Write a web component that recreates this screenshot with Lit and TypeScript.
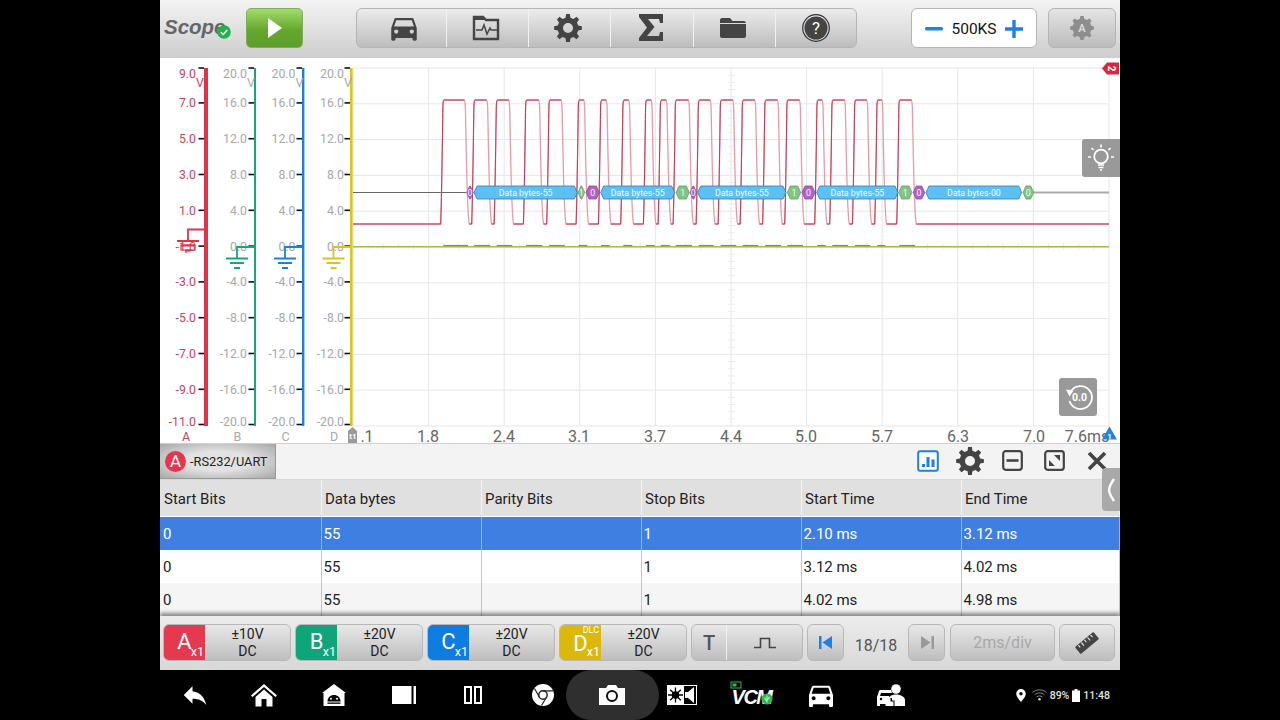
import { LitElement, html, css, svg } from "lit";
import { customElement } from "lit/decorators.js";

const CAR = "M18.92 6.01C18.72 5.42 18.16 5 17.5 5h-11c-.66 0-1.21.42-1.42 1.01L3 12v8c0 .55.45 1 1 1h1c.55 0 1-.45 1-1v-1h12v1c0 .55.45 1 1 1h1c.55 0 1-.45 1-1v-8l-2.08-5.99zM6.5 16c-.83 0-1.5-.67-1.5-1.5S5.67 13 6.5 13s1.5.67 1.5 1.5S7.33 16 6.5 16zm11 0c-.83 0-1.5-.67-1.5-1.5s.67-1.5 1.5-1.5 1.5.67 1.5 1.5-.67 1.5-1.5 1.5zM5 11l1.5-4.5h11L19 11H5z";

function gearPath(c: number, R: number, r: number, hole: number, n = 8) {
  const step = (Math.PI * 2) / n;
  let d = "";
  const p = (rad: number, a: number) => `${(c + rad * Math.sin(a)).toFixed(2)} ${(c - rad * Math.cos(a)).toFixed(2)}`;
  for (let i = 0; i < n; i++) {
    const a = i * step;
    d += `${i ? "L" : "M"}${p(r, a - 0.3 * step)}L${p(R, a - 0.17 * step)}L${p(R, a + 0.17 * step)}L${p(r, a + 0.3 * step)}`;
  }
  d += `Z M${c - hole} ${c}a${hole} ${hole} 0 1 0 ${hole * 2} 0a${hole} ${hole} 0 1 0 ${-hole * 2} 0Z`;
  return d;
}

const HIGHS: [number, number][] = [
  [443.3, 465], [474.3, 487.3], [496.7, 509.3], [526, 539.3], [549.3, 561.7], [578.7, 584.3],
  [601, 606.7], [623.3, 629.3], [646, 651.7], [660.7, 666.7], [675.7, 689], [698.7, 710.7],
  [720.7, 733.3], [742.7, 755.3], [765.2, 778], [787.3, 800], [817.3, 822.7], [832.3, 845],
  [855, 867.3], [877.3, 882.3], [899.3, 912],
];
const HI = 100, LO = 224;

function wave() {
  let all = `M353 ${LO}`;
  let dark = `M353 ${LO}`;
  for (const [a, b] of HIGHS) {
    const rise = `L${a - 2.6} ${LO}C${a - 1.6} ${LO - 30} ${a - 0.9} ${HI + 40} ${a - 0.4} ${HI + 6}Q${a - 0.2} ${HI} ${a + 0.8} ${HI}L${b - 0.6} ${HI}`;
    const fall = `Q${b} ${HI} ${b + 0.4} ${HI + 8}C${b + 1.6} ${HI + 70} ${b + 2.2} ${LO - 4} ${b + 4.4} ${LO}`;
    all += rise + fall;
    dark += rise + `M${b + 4.4} ${LO}`;
  }
  all += `L1109 ${LO}`;
  dark += `L1109 ${LO}`;
  return { all, dark };
}

const XS = Array.from({ length: 11 }, (_, i) => 353 + i * 75.6);
const GY = Array.from({ length: 11 }, (_, i) => 68 + i * 35.8);
const TY = GY.map((y, i) => (i === 0 ? y : y - 0.9 - (i === 10 ? 0.6 : 0)));

type Seg = { k: "p" | "b" | "g"; a: number; b: number; t: string };
const SEGS: Seg[] = [
  { k: "p", a: 466.7, b: 473.3, t: "0" },
  { k: "b", a: 474, b: 577.3, t: "Data bytes-55" },
  { k: "g", a: 578, b: 584.7, t: "1" },
  { k: "p", a: 586, b: 599.3, t: "0" },
  { k: "b", a: 600.7, b: 674.7, t: "Data bytes-55" },
  { k: "g", a: 676, b: 689.3, t: "1" },
  { k: "p", a: 690, b: 696.7, t: "0" },
  { k: "b", a: 697.7, b: 786, t: "Data bytes-55" },
  { k: "g", a: 787.3, b: 800.7, t: "1" },
  { k: "p", a: 802, b: 815, t: "0" },
  { k: "b", a: 816.7, b: 898, t: "Data bytes-55" },
  { k: "g", a: 898.7, b: 912, t: "1" },
  { k: "p", a: 913.3, b: 924.7, t: "0" },
  { k: "b", a: 926, b: 1021.7, t: "Data bytes-00" },
  { k: "g", a: 1023, b: 1033.7, t: "0" },
];
const SEG_COL = { p: ["#b262c4", "#8c4aa0"], b: ["#5cc0f2", "#2f7ea8"], g: ["#84c484", "#5f9f66"] };

const AXES = [
  { lab: ["9.0", "7.0", "5.0", "3.0", "1.0", "-1.0", "-3.0", "-5.0", "-7.0", "-9.0", "-11.0"], x: 204, w: 4, lx: 196, col: "#e0334a", tc: "#c9455a", name: "A", nx: 186 },
  { lab: ["20.0", "16.0", "12.0", "8.0", "4.0", "0.0", "-4.0", "-8.0", "-12.0", "-16.0", "-20.0"], x: 254, w: 2, lx: 247, col: "#12a87c", tc: "#a8a8a8", name: "B", nx: 237.5 },
  { lab: ["20.0", "16.0", "12.0", "8.0", "4.0", "0.0", "-4.0", "-8.0", "-12.0", "-16.0", "-20.0"], x: 302, w: 2.4, lx: 295.5, col: "#1b82dc", tc: "#a8a8a8", name: "C", nx: 285.5 },
  { lab: ["20.0", "16.0", "12.0", "8.0", "4.0", "0.0", "-4.0", "-8.0", "-12.0", "-16.0", "-20.0"], x: 350, w: 2.6, lx: 344, col: "#dcc320", tc: "#a8a8a8", name: "D", nx: 334 },
];

function ground(x: number, y: number, col: string, barX: number, top: number) {
  return svg`<path d="M${barX} ${top}H${x}V${y}" fill="none" stroke=${col} stroke-width="1.8"/>
    <path d="M${x - 11} ${y + 0.5}h22M${x - 7} ${y + 5}h14M${x - 3} ${y + 10}h6" fill="none" stroke=${col} stroke-width="2"/>`;
}

function scope() {
  const w = wave();
  const xl = [".1", "1.8", "2.4", "3.1", "3.7", "4.4", "5.0", "5.7", "6.3", "7.0"];
  const xlx = [367, 428, 504, 579, 655, 731, 806, 882, 958, 1034];
  return html`<svg class="plot" viewBox="160 58 960 386" width="960" height="386">
    ${XS.map((x) => svg`<line x1=${x} x2=${x} y1="68" y2="426" stroke="#e6e6e6"/>`)}
    ${GY.map((y) => svg`<line x1="353" x2="1109" y1=${y} y2=${y} stroke="#e6e6e6"/>`)}
    ${Array.from({ length: 51 }, (_, i) => svg`<line x1="728" x2="735" y1=${68 + i * 7.16} y2=${68 + i * 7.16} stroke="#ececec"/>`)}
    ${Array.from({ length: 51 }, (_, i) => svg`<line x1=${353 + i * 15.12} x2=${353 + i * 15.12} y1="243.500" y2="249.500" stroke="#e8e8e8"/>`)}

    <line x1="353" x2="466" y1="192.5" y2="192.5" stroke="#666" stroke-width="1"/>
    <line x1="1033" x2="1109" y1="192.5" y2="192.5" stroke="#aaa" stroke-width="2"/>

    <path d=${w.all} fill="none" stroke="#e79aa8" stroke-width="1.300"/>
    <path d=${w.dark} fill="none" stroke="#c83850" stroke-width="1"/>

    ${SEGS.map((s) => {
      const c = SEG_COL[s.k];
      const n = Math.min(3, (s.b - s.a) / 2.2);
      return svg`<path d="M${s.a + n} 186H${s.b - n}L${s.b} 192.5L${s.b - n} 199H${s.a + n}L${s.a} 192.5Z" fill=${c[0]} stroke=${c[1]} stroke-width="0.8"/>
      <text x=${(s.a + s.b) / 2} y="195.700" text-anchor="middle" class="seg">${s.t}</text>`;
    })}

    ${HIGHS.map(([a, b]) => svg`<line x1=${a} x2=${b + 3} y1="245.700" y2="245.700" stroke="#2fa98f" stroke-width="1.500"/>`)}
    <line x1="353" x2="1109" y1="246.8" y2="246.8" stroke="#a9bd3e" stroke-width="1.5"/>

    ${AXES.map((a) => svg`
      <rect x=${a.x} y="68" width=${a.w} height="358" fill=${a.col}/>
      ${TY.map((y, i) => svg`
        <rect x=${a.x - 5.5} y=${y - 0.8} width="5.5" height="1.6" fill="#111"/>
        <text x=${a.lx} y=${i === 0 ? y + 9.500 : i === 10 ? y + 1.500 : y + 4.500} text-anchor="end" class="yl" fill=${a.tc}>${a.lab[i]}</text>`)}
      <text x=${a.lx + 4} y="87" text-anchor="middle" class="yl" fill=${a.tc}>V</text>
      <text x=${a.nx} y="441" text-anchor="middle" class="nm" fill=${a.tc}>${a.name}</text>`)}

    ${ground(188, 240.5, "#e0334a", 204, 229.5)}
    <path d="M181 245h14v5h-14zM186 250v3" fill="none" stroke="#e0334a" stroke-width="1.2"/>
    ${ground(237, 258, "#12a87c", 254, 247)}
    ${ground(285, 258, "#1b82dc", 302, 247)}
    ${ground(333.5, 258, "#dcc320", 350, 247)}

    ${xl.map((t, i) => svg`<text x=${xlx[i]} y="441.5" text-anchor="middle" class="xl">${t}</text>`)}
    <text x="1087" y="441.5" text-anchor="middle" class="xl">7.6ms</text>

    <path d="M348 431l4.5-4 4.5 4v12h-9z" fill="#9a9a9a"/>
    <text x="353" y="439" text-anchor="middle" class="t1">t1</text>
    <path d="M1109.500 426.500l7.500 13h-15z" fill="#1f86e0"/>
    <text x="1109.500" y="438.500" text-anchor="middle" class="t1">1</text>

    <path d="M1107 62.500h12v12h-12l-5-6z" fill="#d9263f"/>
    <text transform="translate(1111.500 68.500) rotate(90)" y="3.500" text-anchor="middle" class="t2">2</text>
  </svg>`;
}

const ROWS = [
  ["0", "55", "", "1", "2.10 ms", "3.12 ms"],
  ["0", "55", "", "1", "3.12 ms", "4.02 ms"],
  ["0", "55", "", "1", "4.02 ms", "4.98 ms"],
];
const HEAD = ["Start Bits", "Data bytes", "Parity Bits", "Stop Bits", "Start Time", "End Time"];

const CH = [
  { n: "A", cls: "a", r: "±10V" },
  { n: "B", cls: "b", r: "±20V" },
  { n: "C", cls: "c", r: "±20V" },
  { n: "D", cls: "d", r: "±20V" },
];

@customElement("app-root")
export class AppRoot extends LitElement {
  static styles = css`
    :host { display: block; width: 1280px; height: 720px; background: #000; font-family: Roboto, "Liberation Sans", sans-serif; overflow: hidden; }
    .screen { width: 960px; height: 720px; margin: 0 auto; display: flex; flex-direction: column; background: #fff; }

    .toolbar { height: 58px; box-sizing: border-box; padding: 8px 0 0 4px; display: flex; align-items: flex-start; background: linear-gradient(#f4f4f4, #cdcdcd); flex: none; }
    .logo { width: 82px; height: 40px; display: flex; align-items: center; position: relative; font: italic bold 20.500px "Liberation Sans", sans-serif; color: #666; }
    .logo span { margin-top: -3px; }
    .logo svg { position: absolute; left: 53px; top: 17px; }
    .play { width: 57px; height: 40px; box-sizing: border-box; border-radius: 5px; border: 1px solid #7fae5c; background: linear-gradient(#a0dc6a, #66a82e 55%, #5c9e2a); display: flex; align-items: center; justify-content: center; }
    .group { margin-left: 53px; width: 501px; height: 40px; box-sizing: border-box; border: 1px solid #b5b5b5; border-radius: 6px; background: linear-gradient(#ececec, #bdbdbd); display: flex; }
    .group > div { width: 82.2px; flex: none; display: flex; align-items: center; justify-content: center; border-left: 1px solid #f2f2f2; box-sizing: border-box; padding-bottom: 1px; }
    .group > div:first-child { width: 89px; border-left: none; padding-left: 4px; }
    .group > .w4 { padding-right: 4px; }
    .group > .w1 { padding-right: 2px; }
    .group > .w3 { padding-right: 3px; }
    .zoombox { margin-left: 54px; width: 126px; height: 40px; box-sizing: border-box; border: 1px solid #b5b5b5; border-radius: 6px; background: #fff; display: flex; align-items: center; justify-content: space-between; padding: 2px 13px 0; font-size: 15.500px; color: #111; }
    .auto { margin-left: 11px; width: 68px; height: 40px; box-sizing: border-box; border: 1px solid #b5b5b5; border-radius: 6px; background: linear-gradient(#e4e4e4, #bcbcbc); display: flex; align-items: center; justify-content: center; }

    .scope { position: relative; height: 386px; flex: none; border-bottom: 1px solid #d0d0d0; box-sizing: border-box; background: #fff; }
    .plot { display: block; }
    .seg { font: 8.800px Roboto, sans-serif; fill: #eef8ff; }
    .yl { font: 12.300px Roboto, sans-serif; }
    .nm { font: 12.500px Roboto, sans-serif; }
    .xl { font: 16px Roboto, sans-serif; fill: #666; }
    .t1 { font: bold 8px Roboto, sans-serif; fill: #fff; }
    .t2 { font: bold 10px Roboto, sans-serif; fill: #fff; }
    .bulb { position: absolute; left: 921.500px; top: 81px; width: 38.500px; height: 38px; background: #999; border-radius: 3px 0 0 3px; display: flex; align-items: center; justify-content: center; }
    .reset { position: absolute; left: 899px; top: 320px; width: 38px; height: 38px; background: #999; border-radius: 3px; display: flex; align-items: center; justify-content: center; }

    .decoder { position: relative; flex: none; }
    .tabbar { height: 36px; box-sizing: border-box; background: #f3f3f3; border-bottom: 1px solid #d8d8d8; display: flex; align-items: stretch; }
    .tab { width: 116px; box-sizing: border-box; display: flex; align-items: center; gap: 4px; padding-left: 5px; font-size: 12.800px; color: #222; background: radial-gradient(ellipse at center, #e2e2e2 40%, #a8a8a8 100%); border-right: 1px solid #999; border-bottom: 1px solid #999; white-space: nowrap; }
    .dot { width: 21px; height: 21px; border-radius: 50%; background: #e5364c; color: #fff; font-size: 17px; display: flex; align-items: center; justify-content: center; flex: none; }
    .tools { margin-left: auto; display: flex; align-items: center; padding: 0 13px 2px 0; }
    .tools svg { display: block; flex: none; }
    .tools .t-a { margin-right: 17px; }
    .tools .t-b { margin-right: 18px; }
    .tools .t-c { margin-right: 21px; }
    .tools .t-d { margin-right: 22px; }
    .side { position: absolute; right: 0; top: 24px; width: 18px; height: 43px; background: #a9a9a9; border-radius: 4px 0 0 4px; z-index: 2; display: flex; align-items: center; justify-content: center; }

    .table { height: 136px; overflow: hidden; flex: none; font-size: 15px; color: #222; }
    .tr { display: grid; grid-template-columns: 162px 160px 160px 160px 160px 158px; height: 33px; }
    .tr > div { display: flex; align-items: center; padding-left: 1.500px; border-right: 1px solid #c4c4c4; box-sizing: border-box; }
    .tr > div:first-child { padding-left: 3px; }
    .tr.h { height: 37px; background: #e0e0e0; border-bottom: 1px solid #fff; box-sizing: border-box; }
    .tr.h > div { padding: 2px 0 0 3px; border-right-color: #f4f4f4; }
    .tr.h > div:first-child { padding-left: 4px; }
    .tr.sel { background: #3f7fe2; color: #fff; }
    .tr.sel > div { border-right-color: #8fb4ec; }
    .tr.alt { background: #f5f5f5; }

    .footer { position: relative; height: 54px; flex: none; box-sizing: border-box; padding: 8px 0 0 3px; display: flex; gap: 4px; background: linear-gradient(#ececec, #d8d8d8); box-shadow: 0 -3px 4px rgba(0,0,0,.45); font-size: 14px; color: #222; }
    .btn { height: 37px; box-sizing: border-box; border: 1px solid #b8b8b8; border-radius: 6px; background: linear-gradient(#e8e8e8, #bebebe); display: flex; align-items: center; justify-content: center; flex: none; overflow: hidden; }
    .ch { width: 128px; justify-content: flex-start; }
    .swatch { width: 41px; height: 100%; color: #fff; font-size: 22px; line-height: 18px; display: flex; align-items: center; justify-content: center; position: relative; box-sizing: border-box; padding: 0 0 1px 0; flex: none; }
    .swatch small { position: absolute; right: 1px; bottom: 2px; font-size: 12.500px; line-height: 12px; }
    .swatch i { position: absolute; right: 2px; top: 1px; font: 9px/9px Roboto, sans-serif; }
    .swatch.a { background: #e4394f; } .swatch.b { background: #0ea57b; } .swatch.c { background: #0f7ce0; } .swatch.d { background: #dcb80a; padding-top: 3px; }
    .range { flex: 1; text-align: center; line-height: 16.500px; }
    .trig { width: 112px; padding: 0; justify-content: flex-start; }
    .trig > div { height: 100%; display: flex; align-items: center; justify-content: center; }
    .trig .t { width: 35px; border-right: 1px solid #f0f0f0; font-size: 20px; font-weight: 500; color: #555; box-sizing: border-box; }
    .trig .e { flex: 1; }
    .sq { width: 37px; }
    .count { width: 56px; flex: none; text-align: center; align-self: center; font-size: 16px; color: #555; margin-top: -3px; white-space: nowrap; }
    .time { width: 105px; margin-left: 1px; font-size: 16px; color: #a8a8a8; }
    .rule { width: 56px; }

    .nav { position: relative; height: 50px; flex: none; background: #000; display: flex; align-items: center; color: #e4e4e4; }
    .slot { width: 69.600px; flex: none; height: 100%; display: flex; align-items: center; justify-content: center; position: relative; }
    .slot svg { position: relative; }
    .pill::before { content: ""; position: absolute; left: -11.500px; right: -11.500px; top: 0; bottom: 0; background: #2f2f2f; border-radius: 25px; }
    .vcm { font: italic bold 20px "Liberation Sans", sans-serif; color: #fff; letter-spacing: -1.5px; position: relative; top: 2px; }
    .slot svg.usb { position: absolute; left: 11px; top: 8px; }
    .status { margin-left: auto; padding-right: 10px; display: flex; align-items: center; gap: 3px; font-size: 10.500px; font-weight: 500; white-space: nowrap; }
    .status .pin { margin-right: 3px; }
    .status .clock { font-size: 10.500px; }
  `;

  render() {
    const dark = "#444";
    return html`<div class="screen">
      <div class="toolbar">
        <div class="logo"><span>Scope</span>
          <svg width="14" height="14" viewBox="0 0 14 14"><circle cx="7" cy="7" r="6.800" fill="#22b24c"/><path d="M3.800 7.200l2.300 2.300 4.200-4.500" fill="none" stroke="#fff" stroke-width="1.500"/></svg>
        </div>
        <div class="play"><svg width="16" height="22" viewBox="0 0 16 22"><path d="M1 1l14 10L1 21z" fill="#fff"/></svg></div>
        <div class="group">
          <div><svg width="34" height="34" viewBox="0 0 24 24"><path d=${CAR} fill=${dark}/></svg></div>
          <div class="w4"><svg width="28" height="26" viewBox="0 0 28 26"><path d="M2 2h9l3 3h12v19H2z" fill="none" stroke=${dark} stroke-width="2.400"/><path d="M1 2h10l3 3H1z" fill=${dark}/><path d="M4 15h6l2-5 3 9 3-6 1 2h6" fill="none" stroke=${dark} stroke-width="1.500"/></svg></div>
          <div class="w4"><svg width="28" height="28" viewBox="0 0 28 28"><path d=${gearPath(14, 14, 10.500, 5)} fill=${dark} fill-rule="evenodd"/></svg></div>
          <div class="w1"><svg width="24" height="27" viewBox="0 0 24 27"><path d="M0 0h24v9h-3l-1-4H9l6.500 8L8 22h12l1-4h3v9H0v-3l8-10.500L0 3z" fill=${dark}/></svg></div>
          <div class="w3"><svg width="26" height="20" viewBox="0 0 26 20"><path d="M0 2c0-1 1-2 2-2h8l2.500 3H24c1 0 2 1 2 2H0z" fill=${dark}/><path d="M0 6h26v12c0 1-1 2-2 2H2c-1 0-2-1-2-2z" fill=${dark}/></svg></div>
          <div><svg width="28" height="28" viewBox="0 0 28 28"><circle cx="14" cy="14" r="13.300" fill="none" stroke="#333" stroke-width="1.200"/><circle cx="14" cy="14" r="11.500" fill=${dark}/><text x="14" y="20" text-anchor="middle" font-family="Roboto, sans-serif" font-size="17" fill="#fff">?</text></svg></div>
        </div>
        <div class="zoombox">
          <svg width="18" height="4" viewBox="0 0 18 4"><rect width="18" height="3.400" rx="1.500" fill="#1f86e0"/></svg>
          <span>500KS</span>
          <svg width="18" height="18" viewBox="0 0 18 18"><path d="M7.300 0h3.400v7.300H18v3.400h-7.300V18H7.300v-7.300H0V7.300h7.300z" fill="#1f7fe6"/></svg>
        </div>
        <div class="auto"><svg width="24" height="24" viewBox="0 0 24 24"><path d=${gearPath(12, 12, 9.500, 0.01)} fill="#8e8e8e"/><text x="12" y="16" text-anchor="middle" font-family="Roboto, sans-serif" font-weight="700" font-size="11" fill="#d6d6d6">A</text></svg></div>
      </div>

      <div class="scope">
        ${scope()}
        <div class="bulb"><svg width="30" height="30" viewBox="0 0 30 30" fill="none" stroke="#fff"><circle cx="15" cy="13.500" r="6.800" stroke-width="1.800"/><path d="M12 22h6M12.500 24.500h5M14 27h2" stroke-width="1.500"/><path d="M15 1.500v3M5.500 5l2 2M24.500 5l-2 2M2 14h3M25 14h3" stroke-width="1.600"/></svg></div>
        <div class="reset"><svg width="30" height="30" viewBox="0 0 30 30"><path d="M7 9a11.500 11.500 0 1 1-1.500 10" fill="none" stroke="#fff" stroke-width="1.800" transform="translate(1 0)"/><path d="M3 7.500l7.500 1-4 6z" fill="#fff"/><text x="16.500" y="19" text-anchor="middle" font-family="Roboto, sans-serif" font-weight="700" font-size="10.500" fill="#fff">0.0</text></svg></div>
      </div>

      <div class="decoder">
        <div class="tabbar">
          <div class="tab"><span class="dot">A</span><span>-RS232/UART</span></div>
          <div class="tools">
            <svg class="t-a" width="22" height="22" viewBox="0 0 22 22"><rect x="1.200" y="1.200" width="19.600" height="19.600" rx="2" fill="#fff" stroke="#1f7fe6" stroke-width="2"/><path d="M5 14h3v3H5zM9.500 7h3v10h-3zM14.500 9.500h3V17h-3z" fill="#1f7fe6"/></svg>
            <svg class="t-b" width="28" height="28" viewBox="0 0 28 28"><path d=${gearPath(14, 14, 10.500, 5)} fill=${dark} fill-rule="evenodd"/></svg>
            <svg class="t-c" width="21" height="21" viewBox="0 0 21 21"><rect x="1.200" y="1.200" width="18.600" height="18.600" rx="2.500" fill="none" stroke=${dark} stroke-width="2.200"/><rect x="4.500" y="9.200" width="12" height="2.600" fill=${dark}/></svg>
            <svg class="t-d" width="21" height="21" viewBox="0 0 21 21"><rect x="1.200" y="1.200" width="18.600" height="18.600" rx="2.500" fill="none" stroke=${dark} stroke-width="2.200"/><path d="M16 5v6l-6-6zM5 16v-6l6 6z" fill=${dark}/></svg>
            <svg width="20" height="20" viewBox="0 0 20 20"><path d="M2 2l16 16M18 2L2 18" stroke=${dark} stroke-width="3.600" fill="none"/></svg>
          </div>
        </div>
        <div class="side"><svg width="8" height="24" viewBox="0 0 8 24"><path d="M7 1C3 7 2 9 2 12s1 5 5 11" fill="none" stroke="#fff" stroke-width="2.400"/></svg></div>
        <div class="table">
          <div class="tr h">${HEAD.map((h) => html`<div>${h}</div>`)}</div>
          ${ROWS.map((r, i) => html`<div class="tr ${i === 0 ? "sel" : i === 2 ? "alt" : ""}">${r.map((c) => html`<div>${c}</div>`)}</div>`)}
        </div>
      </div>

      <div class="footer">
        ${CH.map((c) => html`<div class="btn ch">
          <div class="swatch ${c.cls}">${c.n}<small>x1</small>${c.n === "D" ? html`<i>DLC</i>` : ""}</div>
          <div class="range">${c.r}<br />DC</div>
        </div>`)}
        <div class="btn trig">
          <div class="t">T</div>
          <div class="e"><svg width="22" height="12" viewBox="0 0 22 12"><path d="M0 10.500h6.500V1.500h9v9H22" fill="none" stroke="#444" stroke-width="1.600"/></svg></div>
        </div>
        <div class="btn sq"><svg width="14" height="13" viewBox="0 0 14 13"><path d="M0 0h2.500v13H0zM13 0v13L3.500 6.500z" fill="#1f7fe6"/></svg></div>
        <div class="count">18/18</div>
        <div class="btn sq"><svg width="14" height="13" viewBox="0 0 14 13"><path d="M14 0h-2.500v13H14zM1 0v13l9.500-6.500z" fill="#999"/></svg></div>
        <div class="btn time">2ms/div</div>
        <div class="btn rule"><svg width="24" height="24" viewBox="0 0 24 24"><g transform="rotate(-40 12 12)"><rect x="0" y="7.500" width="24" height="9" rx="1" fill="#444"/><path d="M4 8v3M8 8v4M12 8v3M16 8v4M20 8v3" stroke="#ddd" stroke-width="1.200"/></g></svg></div>
      </div>

      <div class="nav">
        <div class="slot"><svg width="30" height="30" viewBox="0 0 24 24"><path d="M10 9V5l-7 7 7 7v-4.100c5 0 8.500 1.600 11 5.100-1-5-4-10-11-11z" fill="#fff"/></svg></div>
        <div class="slot"><svg width="26" height="24" viewBox="0 0 26 24"><path d="M13 1L0 12.500l1.500 1.500L13 4l11.500 10 1.500-1.500z" fill="#fff"/><path d="M4.500 14L13 6.500l8.500 7.500v9.500h-6V16h-5v7.500h-6z" fill="#fff"/></svg></div>
        <div class="slot"><svg width="24" height="22" viewBox="0 0 24 22"><path d="M12 0L0 9h1.500v13h21V9H24z" fill="#fff"/><path d="M5.500 17.500c0-4 3-6.500 6.500-6.500s6.500 2.500 6.500 6.500z" fill="#000"/><circle cx="9" cy="14.800" r="1" fill="#fff"/><circle cx="15" cy="14.800" r="1" fill="#fff"/><rect x="5.500" y="18.500" width="13" height="1.300" fill="#000"/></svg></div>
        <div class="slot"><svg width="24" height="18" viewBox="0 0 24 18"><rect width="19.500" height="18" fill="#fff"/><rect x="21.500" width="2.500" height="18" fill="#fff"/></svg></div>
        <div class="slot"><svg width="18" height="18" viewBox="0 0 18 18" fill="none" stroke="#fff" stroke-width="2"><rect x="1" y="1" width="6" height="16"/><rect x="11" y="1" width="6" height="16"/></svg></div>
        <div class="slot"><svg width="22" height="22" viewBox="0 0 22 22"><circle cx="11" cy="11" r="11" fill="#fff"/><circle cx="11" cy="11" r="4.200" fill="none" stroke="#222" stroke-width="1.400"/><path d="M11 6.800h10M7.400 13L2.500 4.500M14.600 13L9.500 21.500" stroke="#222" stroke-width="1.200" fill="none"/></svg></div>
        <div class="slot pill"><svg width="26" height="20" viewBox="0 0 26 20"><path d="M0 3h7l2-3h8l2 3h7v17H0z" fill="#fff"/><circle cx="13" cy="11" r="5" fill="none" stroke="#111" stroke-width="2"/></svg></div>
        <div class="slot"><svg width="30" height="20" viewBox="0 0 30 20"><rect width="30" height="20" fill="#fff"/><rect x="17" y="1" width="12" height="18" fill="#000"/><path d="M18 7h3l6-5v16l-6-5h-3z" fill="#fff"/><circle cx="8.500" cy="10" r="3.800" fill="#000"/><path d="M8.500 2.500v15M1 10h15M3.200 4.700l10.600 10.600M13.800 4.700L3.200 15.300" stroke="#000" stroke-width="1.300"/></svg></div>
        <div class="slot"><span class="vcm">VCM</span>
          <svg class="usb" width="50" height="34" viewBox="0 0 50 34"><rect x="3" y="4" width="10" height="6" fill="none" stroke="#2db84d" stroke-width="1"/><rect x="4.500" y="5.500" width="4" height="3" fill="#2db84d"/><circle cx="39" cy="21" r="5.500" fill="#2db84d"/><path d="M39 17.500v7M37 19.500v2l2 1M41 19v1.500l-2 1" stroke="#fff" stroke-width=".8" fill="none"/></svg>
        </div>
        <div class="slot"><svg width="32" height="32" viewBox="0 0 24 24"><path d=${CAR} fill="#fff"/></svg></div>
        <div class="slot"><svg width="30" height="22" viewBox="0 0 30 22"><path d="M1 13l2-6c.3-.8 1-1 1.600-1H15l1 3H5l-1 3h9v10H9.500v-2H4v2H1z" fill="#fff"/><circle cx="5" cy="15" r="1.200" fill="#000"/><circle cx="20" cy="5" r="4.800" fill="#fff"/><path d="M12 22v-6c0-3 3-5.500 8-5.500s9 2.500 9 5.500v6z" fill="#fff"/><path d="M14.500 14v3.500h3V22h1v-5.500h-2.500V14z" fill="#000"/></svg></div>
        <div class="status">
          <svg class="pin" width="10" height="13" viewBox="0 0 10 13"><path d="M5 0a4.800 4.800 0 0 0-4.800 4.800C.2 8 5 13 5 13s4.800-5 4.800-8.200A4.800 4.800 0 0 0 5 0z" fill="#fff"/><circle cx="5" cy="4.800" r="1.700" fill="#000"/></svg>
          <svg width="15" height="12" viewBox="0 0 15 12" fill="none" stroke="#888" stroke-width="1"><path d="M.5 3.500c4-3.500 10-3.500 14 0M2.500 5.800c3-2.500 7-2.500 10 0M4.500 8c2-1.500 4-1.500 6 0"/><circle cx="7.500" cy="10.300" r="1.200" fill="#ddd" stroke="none"/></svg>
          <span>89%</span>
          <svg width="8" height="13" viewBox="0 0 8 13"><path d="M2.500 0h3v1.500H8V13H0V1.500h2.500z" fill="#fff"/></svg>
          <span class="clock">11:48</span>
        </div>
      </div>
    </div>`;
  }
}
